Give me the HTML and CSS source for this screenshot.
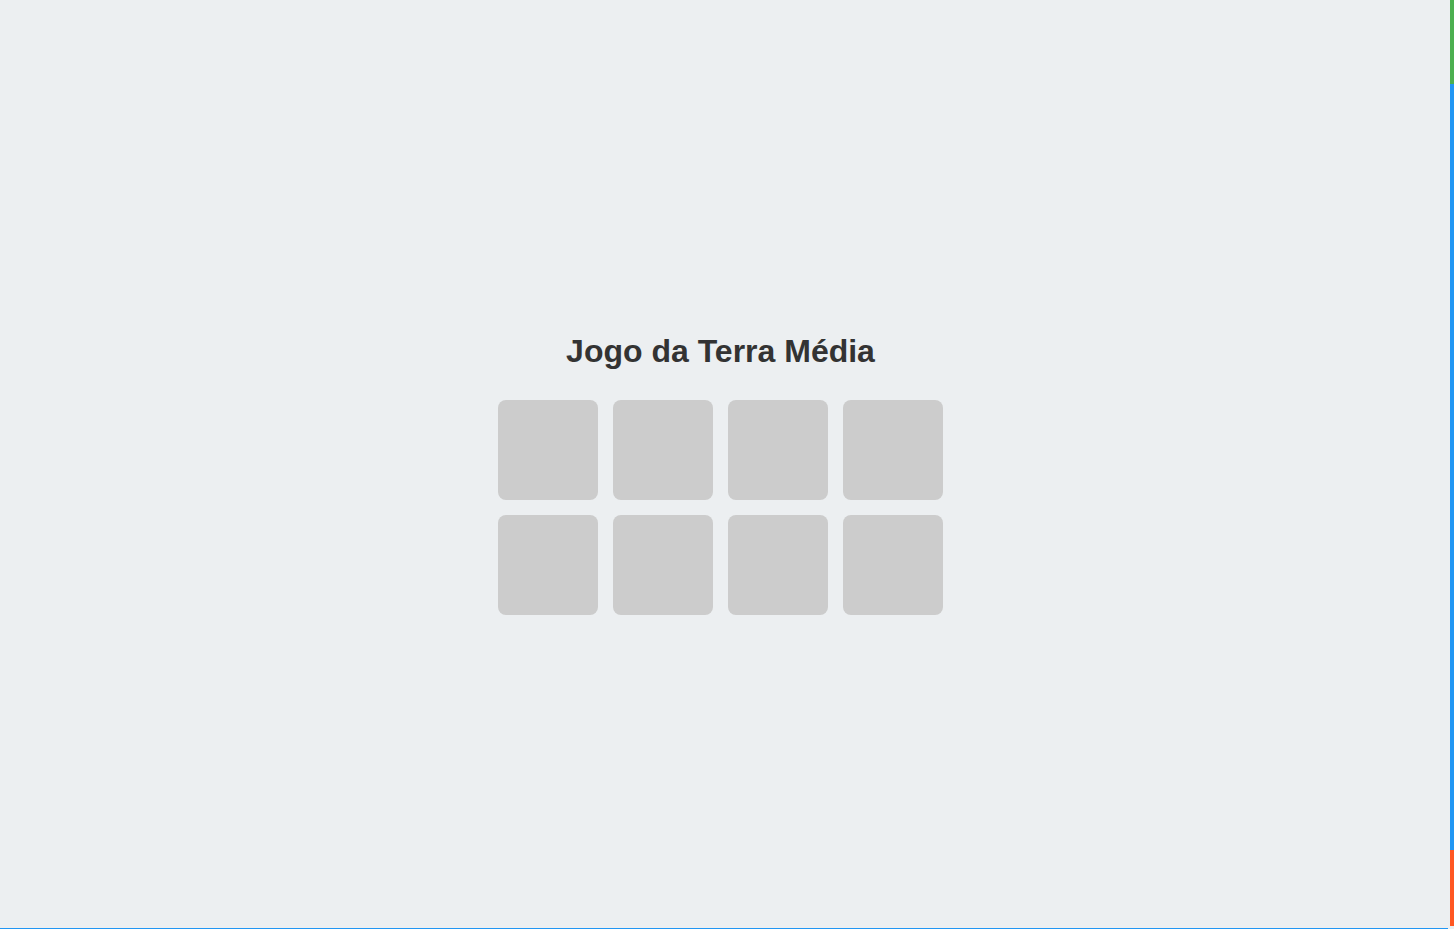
FILE: index.html
```html
<!DOCTYPE html>
<html lang="pt">
<head>
<meta charset="utf-8">
<title>Jogo da Terra Média</title>
<link rel="stylesheet" href="styles.css">
</head>
<body>
<div class="page">
  <main class="main">
    <h1 class="title">Jogo da Terra Média</h1>
    <div class="board">
      <div class="card"></div>
      <div class="card"></div>
      <div class="card"></div>
      <div class="card"></div>
      <div class="card"></div>
      <div class="card"></div>
      <div class="card"></div>
      <div class="card"></div>
    </div>
  </main>
  <aside class="edge">
    <div class="bar">
      <div class="seg seg-green"></div>
      <div class="seg seg-blue"></div>
      <div class="seg seg-orange"></div>
    </div>
  </aside>
</div>
</body>
</html>
```

FILE: styles.css
```css
html, body {
  margin: 0;
  padding: 0;
  background: #eceff1;
  font-family: "Liberation Sans", Arial, sans-serif;
}
.page {
  display: flex;
  height: 100vh;
}
.main {
  flex: 1;
  display: flex;
  flex-direction: column;
  align-items: center;
  justify-content: center;
  padding-right: 7px;
  border-bottom: 1px solid #2196f3;
  box-sizing: border-box;
}
.title {
  margin: 19px 0 30px;
  font-size: 32px;
  line-height: 37px;
  font-weight: bold;
  color: #333333;
}
.board {
  display: grid;
  grid-template-columns: repeat(4, 100px);
  gap: 15px;
}
.card {
  width: 100px;
  height: 100px;
  background: #cccccc;
  border-radius: 8px;
}
.edge {
  width: 6px;
  display: flex;
  justify-content: flex-end;
}
.bar {
  width: 4px;
  display: flex;
  flex-direction: column;
  padding-bottom: 3px;
}
.seg-green { height: 84px; background: #4caf50; }
.seg-blue { height: 766px; background: #2196f3; }
.seg-orange { flex: 1; background: #ff5722; }
```
